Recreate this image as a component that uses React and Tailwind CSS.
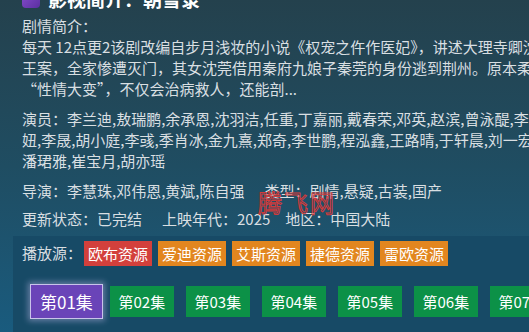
import React from 'react';

const sources = [
  { name: '欧布资源', color: 'bg-[#d3403c]' },
  { name: '爱迪资源', color: 'bg-[#e2861f]' },
  { name: '艾斯资源', color: 'bg-[#e2861f]' },
  { name: '捷德资源', color: 'bg-[#e2861f]' },
  { name: '雷欧资源', color: 'bg-[#e2861f]' },
];

const episodes = ['第02集', '第03集', '第04集', '第05集', '第06集', '第07集'];

const Line = ({ children }) => (
  <div className="whitespace-nowrap h-[21px] leading-[21px]">{children}</div>
);

export default function App() {
  return (
    <div
      className="w-[529px] h-[332px] overflow-hidden relative bg-gradient-to-b from-[#24414d] via-[#1f4d62] to-[#195b7e] text-[#d9dfe2] text-[15px]"
      style={{ fontFamily: '"Noto Sans CJK SC", "Noto Sans", sans-serif' }}
    >
      <div className="pl-[22px] -mt-[13px]">
        <div className="flex items-center gap-2 h-[24px]">
          <div className="w-[18px] h-[18px] rounded-sm bg-gradient-to-br from-[#8a4fd0] to-[#5b2fa0]" />
          <span className="text-white font-bold text-[19px] whitespace-nowrap">影视简介：朝雪录</span>
        </div>
        <div className="mt-[4px]">
          <Line>剧情简介：</Line>
          <Line>每天 12点更2该剧改编自步月浅妆的小说《权宠之仵作医妃》，讲述大理寺卿沈毅</Line>
          <Line>王案，全家惨遭灭门，其女沈莞借用秦府九娘子秦莞的身份逃到荆州。原本柔弱</Line>
          <Line>“性情大变”，不仅会治病救人，还能剖...</Line>
        </div>
        <div className="mt-[9px]">
          <Line>演员：李兰迪,敖瑞鹏,余承恩,沈羽洁,任重,丁嘉丽,戴春荣,邓英,赵滨,曾泳醍,李佳</Line>
          <Line>妞,李晟,胡小庭,李彧,季肖冰,金九熹,郑奇,李世鹏,程泓鑫,王路晴,于轩晨,刘一宏,王</Line>
          <Line>潘珺雅,崔宝月,胡亦瑶</Line>
        </div>
        <div className="mt-[6px] h-[28px] leading-[28px] whitespace-nowrap">
          导演：李慧珠,邓伟恩,黄斌,陈自强<span className="ml-[20px]">类型：剧情,悬疑,古装,国产</span>
        </div>
        <div className="h-[28px] leading-[28px] whitespace-nowrap">
          更新状态：已完结<span className="ml-[20px]">上映年代：2025</span><span className="ml-[15px]">地区：中国大陆</span>
        </div>
      </div>

      <div className="ml-[13px] mt-[3px] bg-[#174a66] h-[200px] pl-[9px]">
        <div className="flex items-center gap-[6px] pt-[5px] whitespace-nowrap">
          <span className="mr-[-4px]">播放源：</span>
          {sources.map((s) => (
            <span key={s.name} className={`${s.color} text-white h-[25px] leading-[25px] px-[4px]`}>
              {s.name}
            </span>
          ))}
        </div>
        <div className="flex items-center gap-[12px] mt-[18px] pl-[8px] whitespace-nowrap">
          <span className="bg-[#6a44b8] border border-[#c9c3ea] text-white text-[17px] h-[35px] leading-[33px] px-[9px] shadow-[0_0_6px_2px_rgba(200,190,240,0.45)] mr-[-5px]">
            第01集
          </span>
          {episodes.map((e) => (
            <span key={e} className="bg-[#0c9147] text-white h-[31px] leading-[31px] w-[64px] text-center shrink-0">
              {e}
            </span>
          ))}
        </div>
      </div>

      <div
        className="absolute left-[258px] top-[184px] text-[24px] text-transparent [-webkit-text-stroke:1px_#d23a3a] tracking-[2px]"
        style={{ fontFamily: '"Noto Sans CJK SC", serif' }}
      >
        腾飞网
      </div>
    </div>
  );
}
